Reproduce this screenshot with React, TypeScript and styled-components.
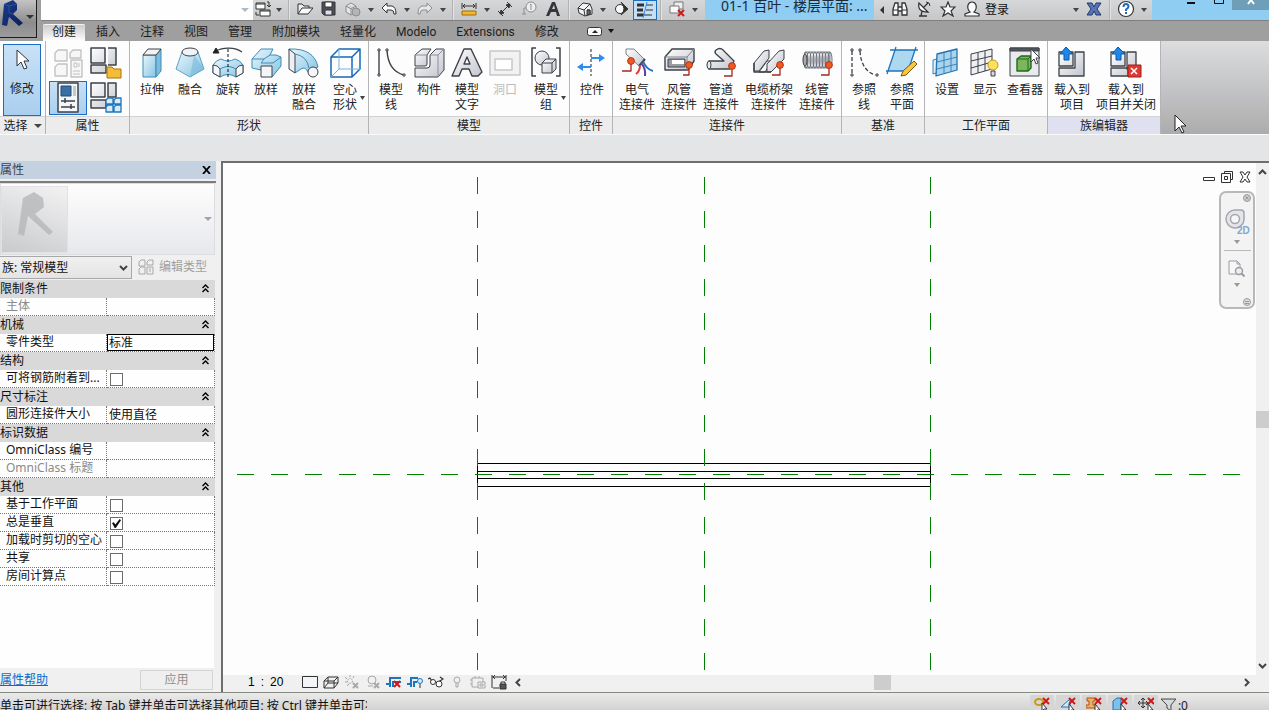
import React, { useState } from "react";
import styled, { createGlobalStyle, css } from "styled-components";

const GlobalStyle = createGlobalStyle`
  *, *::before, *::after { box-sizing: border-box; }
  html, body, #root { height: 100%; }
  body {
    margin: 0;
    overflow: hidden;
    background: #f0f0f0;
    color: #222;
    font-family: "Noto Sans", "Noto Sans CJK SC", sans-serif;
    font-size: 12px;
    line-height: 16px;
  }
  button, input, select { font: inherit; color: inherit; margin: 0; padding: 0; }
  button { border: 0; background: none; white-space: nowrap; }
`;

const Page = styled.div`
  display: flex;
  flex-direction: column;
  height: 100vh;
`;

/* ---------- header ---------- */

const Header = styled.header`
  display: grid;
  grid-template-columns: 41px minmax(0, 1fr);
  grid-template-rows: 21px 20px;
  flex: none;
  background: #9f9f9f;
`;

const AppButton = styled.button`
  grid-row: 1 / 3;
  display: flex;
  align-items: flex-start;
  width: 37px;
  height: 38px;
  background: linear-gradient(#c4c4c4, #8c8c8c 60%, #9c9c9c);
  border: solid #1c1c1c;
  border-width: 0 1px 1px 0;
`;

const TitleBar = styled.div`
  display: flex;
  align-items: stretch;
  min-width: 0;
  background: linear-gradient(#d6d7d8, #c6c7c9);
  border-bottom: 1px solid #808080;
  overflow: hidden;
`;

const FamilyBox = styled.div`
  display: flex;
  align-items: center;
  justify-content: flex-end;
  width: 212px;
  flex: none;
  padding-right: 4px;
  background: #fefefe;
`;

const ToolCluster = styled.div`
  display: flex;
  flex: none;
  padding-right: 4px;
`;

const ToolButton = styled.button<{ $active?: boolean; $narrow?: boolean }>`
  display: flex;
  align-items: center;
  justify-content: center;
  width: ${(p) => (p.$narrow ? 20 : 24)}px;
  flex: none;
  padding-bottom: 2px;
  ${(p) =>
    p.$active &&
    css`
      background: #c5dff5;
      border: 1px solid #1a6fc4;
      padding-bottom: 1px;
    `}
`;

const DropButton = styled.button`
  display: flex;
  align-items: center;
  justify-content: center;
  width: 12px;
  flex: none;
`;

const Divider = styled.span`
  width: 8px;
  flex: none;
  border-left: 1px solid #b2b2b2;
  background: linear-gradient(90deg, #e4e4e4 1px, transparent 1px);
  margin-left: 3px;
  margin-right: -3px;
`;

const DocTitle = styled.h1`
  flex: 1;
  min-width: 0;
  margin: 0;
  padding-left: 16px;
  overflow: hidden;
  white-space: nowrap;
  background: #8fcdf2;
  color: #1b2a38;
  font-size: 14px;
  font-weight: 400;
  line-height: 11px;
`;

const InfoCenter = styled.div`
  display: flex;
  width: 278px;
  flex: none;
  padding: 0 2px;
`;

const LoginButton = styled.button`
  flex: 1;
  padding-left: 1px;
  text-align: left;
  line-height: 18px;
  color: #111;
`;

const WindowButtons = styled.div`
  display: flex;
  width: 117px;
  flex: none;
  justify-content: flex-end;
  align-items: flex-start;
  background: #8fcdf2;
`;

const WindowButton = styled.button<{ $close?: boolean }>`
  display: flex;
  justify-content: center;
  width: ${(p) => (p.$close ? 37 : 27)}px;
  height: 10px;
  background: ${(p) => (p.$close ? "#6f9fb8" : "none")};
`;

const TabRow = styled.nav`
  display: flex;
  align-items: stretch;
  padding-left: 1px;
`;

const Tab = styled.button<{ $active?: boolean }>`
  margin: 3px 1px 0;
  padding: 0 9px;
  line-height: 17px;
  color: #1d1d1d;
  font-family: Roboto, "Noto Sans CJK SC", sans-serif;
  ${(p) =>
    p.$active &&
    css`
      background: linear-gradient(#c9c9c9, #fdfdfd);
      border-radius: 2px 2px 0 0;
      box-shadow: inset 0 1px #f4f4f4;
    `}
`;

const TabToggle = styled.button`
  display: flex;
  align-items: center;
  gap: 5px;
  margin-left: 18px;
`;

/* ---------- ribbon ---------- */

const Ribbon = styled.div`
  display: flex;
  flex: none;
  height: 94px;
  background: linear-gradient(#dcdddf, #acacad);
  border-bottom: 1px solid #fafafa;
`;

const Group = styled.section`
  display: flex;
  flex-direction: column;
  flex: none;
  background: #fdfdfd;
  border-right: 1px solid #b4b4b6;
`;

const GroupTools = styled.div<{ $tight?: boolean; $roomy?: boolean }>`
  display: flex;
  flex: 1;
  padding: ${(p) => (p.$tight ? "3px 4px 0 3px" : p.$roomy ? "0 3px" : "0 1px 0 3px")};
`;

const GroupTitle = styled.h2<{ $accent?: boolean }>`
  display: flex;
  align-items: center;
  justify-content: center;
  gap: 6px;
  height: 18px;
  margin: 0;
  font-size: 12px;
  font-weight: 400;
  line-height: 17px;
  border-top: 1px solid #d2d2d2;
  background: ${(p) => (p.$accent ? "#dfe1f1" : "#ececec")};
`;

const BigButton = styled.button<{ $menu?: boolean }>`
  display: flex;
  flex-direction: column;
  align-items: center;
  gap: 4px;
  min-width: ${(p) => (p.$menu ? 44 : 38)}px;
  padding: 5px 3px 0;
  line-height: 15px;
  &:disabled { color: #bcbcbc; }
`;

const BigLabel = styled.span`
  display: flex;
  align-items: flex-end;
  white-space: pre-line;
  text-align: center;
`;

const MenuMark = styled.span`
  width: 0;
  padding-bottom: 12px;
  padding-left: 3px;
  margin-right: -3px;
  line-height: 0;
`;

const ModifyButton = styled.button`
  display: flex;
  flex-direction: column;
  align-items: center;
  gap: 4px;
  width: 38px;
  height: 72px;
  background: linear-gradient(#c9e1f6, #a9cfee);
  border: 1px solid #1a6fc4;
`;

const PaletteGrid = styled.div`
  display: grid;
  grid-template-columns: 38px 38px;
  grid-template-rows: 37px 34px;
`;

const PaletteButton = styled.button<{ $active?: boolean }>`
  display: flex;
  align-items: center;
  justify-content: center;
  ${(p) =>
    p.$active &&
    css`
      background: linear-gradient(#c9e1f6, #a9cfee);
      border: 1px solid #1a6fc4;
    `}
`;

const RibbonRest = styled.div`
  flex: 1;
  position: relative;
`;

const Pointer = styled.svg`
  position: absolute;
  left: 13px;
  top: 73px;
`;

const OptionsBar = styled.div`
  height: 26px;
  flex: none;
  background: #e3e5e7;
`;

/* ---------- properties ---------- */

const Workspace = styled.main`
  display: grid;
  grid-template-columns: 221px minmax(0, 1fr);
  flex: 1;
  min-height: 0;
`;

const Palette = styled.aside`
  display: flex;
  flex-direction: column;
  margin-right: 5px;
  min-height: 0;
  background: #f0f0f0;
`;

const PaletteTitle = styled.div`
  display: flex;
  align-items: center;
  justify-content: space-between;
  height: 18px;
  flex: none;
  padding-right: 5px;
  background: #c3d1e0;
  color: #3a4450;
  line-height: 18px;
`;

const PaletteBody = styled.div`
  display: flex;
  flex-direction: column;
  flex: 1;
  min-height: 0;
  margin-top: 2px;
  padding-right: 1px;
  border-top: 2px solid #7c7c7c;
`;

const TypeSelector = styled.button`
  display: flex;
  align-items: center;
  justify-content: space-between;
  height: 72px;
  flex: none;
  padding: 1px 2px 1px 0;
  background: linear-gradient(#fdfdfd, #e7e8ec);
  border: 1px solid #dcdde1;
`;

const Preview = styled.span`
  display: flex;
  width: 67px;
  height: 67px;
  border: 1px solid #e2e2e4;
  background: linear-gradient(20deg, #c9cacc, #f2f2f3);
`;

const FilterRow = styled.div`
  display: flex;
  align-items: center;
  gap: 6px;
  height: 25px;
  flex: none;
`;

const SelectWrap = styled.span`
  display: grid;
  grid-template-columns: 1fr 16px;
  align-items: center;
  width: 132px;
  height: 23px;
  border: 1px solid #a8a8a8;
  border-left: 0;
  background: linear-gradient(#f0f0f0, #e4e4e4);
`;

const FamilySelect = styled.select`
  grid-area: 1 / 1 / 2 / 3;
  width: 100%;
  height: 21px;
  padding-left: 2px;
  appearance: none;
  border: 0;
  background: none;
  color: #111;
`;

const SelectMark = styled.svg`
  grid-area: 1 / 2;
  justify-self: center;
  pointer-events: none;
`;

const EditType = styled.button`
  display: flex;
  align-items: center;
  gap: 5px;
  padding-bottom: 2px;
  color: #a0a0a0;
`;

const PropTable = styled.table`
  width: 215px;
  flex: none;
  border-collapse: separate;
  border-spacing: 0;
  table-layout: fixed;
  background: #fefefe;
  color: #111;
`;

const NameCol = styled.col`
  width: 107px;
`;

const SectionHead = styled.th`
  height: 18px;
  padding: 0 0 1px;
  background: #d9d9d9;
  font-weight: 400;
  text-align: left;
  line-height: 17px;
`;

const SectionToggle = styled.button`
  display: flex;
  align-items: center;
  justify-content: space-between;
  width: 100%;
  padding-right: 6px;
`;

const NameCell = styled.th<{ $muted?: boolean }>`
  height: 18px;
  padding: 0 0 2px 6px;
  border-right: 1px dotted #777;
  border-bottom: 1px dotted #777;
  font-weight: 400;
  text-align: left;
  white-space: nowrap;
  line-height: 15px;
  color: ${(p) => (p.$muted ? "#8a8a8a" : "#111")};
`;

const ValueCell = styled.td`
  height: 18px;
  padding: 0;
  border-right: 1px dotted #777;
  border-bottom: 1px dotted #777;
  line-height: 0;
`;

const ValueInput = styled.input<{ $focus?: boolean }>`
  display: block;
  width: 100%;
  height: 17px;
  padding: 0 2px 2px;
  border: 0;
  outline: 0;
  background: none;
  line-height: 15px;
  ${(p) =>
    p.$focus &&
    css`
      border: 1px solid #000;
      padding: 0 1px 2px;
    `}
`;

const Tick = styled.input`
  appearance: none;
  display: grid;
  place-items: center;
  width: 13px;
  height: 13px;
  margin: 3px 0 1px 3px;
  border: 1px solid #6c6c6c;
  background: #fff;
  &:checked::before {
    content: "";
    width: 9px;
    height: 9px;
    background: #111;
    clip-path: polygon(0 45%, 20% 35%, 38% 60%, 85% 0, 100% 15%, 42% 100%, 30% 100%);
  }
`;

const TableFill = styled.div`
  flex: 1;
  min-height: 0;
  margin-right: 1px;
  background: #fefefe;
`;

const PaletteFooter = styled.div`
  display: flex;
  justify-content: space-between;
  align-items: center;
  height: 24px;
  flex: none;
  padding-right: 2px;
`;

const HelpLink = styled.a`
  color: #0b6bc9;
`;

const ApplyButton = styled.button`
  width: 73px;
  height: 20px;
  border: 1px solid #d4d4d4;
  background: #efefef;
  color: #8f8f8f;
`;

/* ---------- view ---------- */

const View = styled.section`
  position: relative;
  display: grid;
  grid-template-columns: minmax(0, 1fr) 13px;
  grid-template-rows: minmax(0, 1fr) 17px;
  border: solid #6e6e6e;
  border-width: 2px 0 0 2px;
`;

const Drawing = styled.svg`
  width: 100%;
  height: 100%;
  background: #fdfdfd;
`;

const VScroll = styled.div`
  display: flex;
  flex-direction: column;
  align-items: center;
  justify-content: space-between;
  padding: 5px 0;
  background: #f0f0f0;
`;

const ScrollThumb = styled.span<{ $flat?: boolean }>`
  width: ${(p) => (p.$flat ? 17 : 13)}px;
  height: ${(p) => (p.$flat ? 15 : 17)}px;
  background: #cdcdcd;
`;

const ViewBar = styled.div`
  grid-column: 1 / 3;
  display: flex;
  align-items: center;
  padding: 0 0 3px 25px;
  background: #f0f0f0;
`;

const ScaleButton = styled.button`
  display: flex;
  gap: 6px;
  width: 51px;
  text-align: left;
  color: #000;
  font-family: "Liberation Sans", sans-serif;
`;

const ViewButton = styled.button`
  display: flex;
  justify-content: center;
  width: 21px;
  flex: none;
`;

const HScroll = styled.div`
  display: flex;
  flex: 1;
  align-items: center;
  justify-content: space-between;
  padding: 0 18px 0 5px;
`;

const HTrack = styled.span`
  display: flex;
  flex: 1;
  justify-content: center;
`;

const MdiButtons = styled.div`
  position: absolute;
  top: 7px;
  right: 17px;
  display: flex;
  gap: 4px;
`;

const NavBar = styled.div`
  position: absolute;
  top: 28px;
  right: 14px;
  display: flex;
  flex-direction: column;
  align-items: center;
  width: 36px;
  height: 118px;
  border: 2px solid #b8b8b8;
  border-radius: 7px;
  background: #f3f3f3;
`;

const NavSmall = styled.button`
  display: flex;
  align-self: flex-end;
  padding: 1px 2px;
`;

const NavTool = styled.button<{ $line?: boolean }>`
  display: flex;
  flex-direction: column;
  align-items: center;
  justify-content: center;
  gap: 5px;
  width: 27px;
  flex: 1;
  border-top: ${(p) => (p.$line ? "1px solid #b8b8b8" : "0")};
`;

const StatusBar = styled.footer`
  display: flex;
  justify-content: space-between;
  height: 18px;
  flex: none;
  overflow: hidden;
  border-top: 1px solid #868a80;
  background: linear-gradient(#ebebeb, #d2d2d2);
`;

const StatusText = styled.p`
  width: 367px;
  margin: 0;
  padding-top: 5px;
  overflow: hidden;
  white-space: nowrap;
  color: #111;
`;

const StatusTools = styled.div`
  display: flex;
  gap: 2px;
  padding: 2px 81px 0 0;
`;

const StatusButton = styled.button<{ $plain?: boolean }>`
  display: flex;
  align-items: flex-start;
  justify-content: center;
  width: ${(p) => (p.$plain ? 28 : 24)}px;
  height: 24px;
  padding-top: ${(p) => (p.$plain ? 3 : 1)}px;
  background: ${(p) => (p.$plain ? "none" : "#d6d6d6")};
`;

/* ---------- drawings ---------- */

const Caret = ({ c = "#444", w = 8 }: { c?: string; w?: number }) => (
  <svg width={w} height="4" viewBox="0 0 8 4" preserveAspectRatio="none" aria-hidden="true">
    <path d="M0 0h8L4 4z" fill={c} />
  </svg>
);

const S = ({ children, size = 16, stroke = "#333" }: { children: React.ReactNode; size?: number; stroke?: string }) => (
  <svg width={size} height={size} viewBox={`0 0 ${size} ${size}`} fill="none" stroke={stroke} aria-hidden="true">
    {children}
  </svg>
);

const B = ({ children, stroke = "#3c4148" }: { children: React.ReactNode; stroke?: string }) => (
  <svg width="32" height="32" viewBox="0 0 32 32" fill="none" stroke={stroke} strokeLinejoin="round" aria-hidden="true">
    {children}
  </svg>
);

const DefsSvg = styled.svg`
  position: absolute;
  width: 0;
  height: 0;
`;

const Gradients = () => (
  <DefsSvg aria-hidden="true">
    <defs>
      <linearGradient id="aqua" x1="0" y1="0" x2="1" y2="1">
        <stop offset="0" stopColor="#e9f6fc" />
        <stop offset="1" stopColor="#86c4e2" />
      </linearGradient>
      <linearGradient id="steel" x1="0" y1="0" x2="1" y2="1">
        <stop offset="0" stopColor="#ffffff" />
        <stop offset="1" stopColor="#c2c5ce" />
      </linearGradient>
      <linearGradient id="navy" x1="0" y1="0" x2="1" y2="1">
        <stop offset="0" stopColor="#1c3f8c" />
        <stop offset="1" stopColor="#0a1d5c" />
      </linearGradient>
    </defs>
  </DefsSvg>
);

const RedX = ({ x, y }: { x: number; y: number }) => (
  <path d={`M${x} ${y}l6 6m0-6l-6 6`} stroke="#cc1a1a" strokeWidth="2" />
);

const Node = ({ x, y, d }: { x: number; y: number; d: string }) => (
  <g>
    <path d={d} stroke="#a32a1c" strokeWidth="1.3" />
    <circle cx={x} cy={y} r="3.4" fill="#ee5a24" stroke="#b53313" />
  </g>
);

const icons: Record<string, React.ReactNode> = {
  extrude: (
    <B>
      <path d="M7 9h13v22H7z" fill="url(#aqua)" stroke="#3a8db8" />
      <path d="M20 9l5-6v22l-5 6z" fill="#7cbddd" stroke="#3a8db8" />
      <path d="M7 9l5-6h13l-5 6z" fill="#f1f3f6" />
    </B>
  ),
  blend: (
    <B>
      <path d="M8 6L2 23l14 8 14-8-6-17z" fill="url(#aqua)" stroke="#5aa3c8" />
      <path d="M20 9l10 14-14 8z" fill="#6fb4d6" fillOpacity=".5" stroke="none" />
      <ellipse cx="16" cy="6" rx="8" ry="4" fill="#f1f3f6" />
    </B>
  ),
  revolve: (
    <B>
      <path d="M30 6C23 1 11 1 4 5" strokeWidth="1.3" />
      <path d="M1 7l3-5 3 5z" fill="#222" stroke="#222" />
      <path d="M1 19q3-5 8-6 7 4 14 0 5 1 8 6v8l-7 4q-8-5-16 0l-7-4z" fill="url(#aqua)" stroke="#3a8db8" />
      <path d="M1 19q5 0 7 4v8l-7-4zM31 19q-5 0-7 4v8l7-4z" fill="#f6f8fa" />
      <path d="M8 23q8-5 16 0" stroke="#3a8db8" />
      <path d="M16 3v28" strokeDasharray="3 2" stroke="#111" />
    </B>
  ),
  sweep: (
    <B>
      <path d="M2 13l9-10h12l-3 6h6l5 2v9l-9 11-11-7-9-2z" fill="url(#aqua)" stroke="#3a8db8" />
      <path d="M2 13h12l6-4M14 13l-3 4h12l8-6" stroke="#3a8db8" />
      <path d="M11 20h11v11H11z" fill="#f4f5f7" />
    </B>
  ),
  sweptBlend: (
    <B>
      <path d="M1 3q25-1 29 18l-10 5q-3-6-7-3l-6 4z" fill="url(#aqua)" stroke="#3a8db8" />
      <path d="M1 3l6 5v19l-6-4z" fill="#eceff3" />
      <path d="M7 8q12 2 14 14" stroke="#3a8db8" />
      <circle cx="25" cy="26" r="5" fill="#f4f5f7" />
    </B>
  ),
  void: (
    <B stroke="#1668b8">
      <path d="M2 11h21v20H2zM2 11l8-8h21v20l-8 8M23 11l8-8" strokeWidth="1.5" />
      <path d="M10 3v20h21M10 23l-8 8" stroke="#6fb3e6" />
    </B>
  ),
  modelLine: (
    <B>
      <path d="M4 4v25M12 4q1 21 17 25" strokeWidth="1.4" />
      <path d="M3 3h2v2H3zM3 28h2v2H3zM11 3h2v2h-2zM28 28h2v2h-2z" fill="#fff" />
    </B>
  ),
  component: (
    <B>
      <path d="M2 9l7-6h9l-4 6v9q0 2-2 2H2z" fill="url(#steel)" />
      <path d="M17 9l6-6h8v21l-6 7H2v-9h12q3 0 3-3z" fill="url(#steel)" />
      <path d="M17 9h8v22M25 9l6-6M2 9h12" stroke="#8b9099" />
    </B>
  ),
  modelText: (
    <B>
      <path d="M1 30L13 3h7l11 23-4 4h-6l-3-7h-7l-3 7z" fill="url(#steel)" strokeWidth="1.4" />
      <path d="M13 18l3-7 3 7z" fill="#fff" strokeWidth="1.4" />
    </B>
  ),
  opening: (
    <B stroke="#c8c8cc">
      <path d="M1 5h30v24H1z" fill="#f2f2f3" strokeWidth="1.5" />
      <path d="M6 13h17v11H6z" fill="#fff" strokeWidth="1.5" />
    </B>
  ),
  modelGroup: (
    <B>
      <path d="M6 2H2v28h4M26 2h4v28h-4" strokeWidth="1.5" />
      <circle cx="12" cy="12" r="7" fill="url(#steel)" />
      <path d="M12 17l4-4h10v10l-4 4H12z" fill="url(#steel)" />
      <path d="M12 17h10v10M22 17l4-4" />
    </B>
  ),
  control: (
    <B>
      <path d="M15 3v27" strokeDasharray="3 2" stroke="#222" />
      <path d="M15 12h10M15 21H5" stroke="#2c8cf0" strokeWidth="2" />
      <path d="M23 8l6 4-6 4zM7 17l-6 4 6 4z" fill="#2c8cf0" stroke="none" />
    </B>
  ),
  electric: (
    <B>
      <path d="M5 3h8l11 11-6 6L5 8z" fill="url(#steel)" stroke="#7d828a" />
      <path d="M18 20l6-7" strokeWidth="2" />
      <path d="M22 15q3 8 10 10" stroke="#1d75bd" strokeWidth="2" />
      <path d="M20 17q5 5 4 13" stroke="#5a40a8" strokeWidth="2" />
      <path d="M19 19q0 6-4 9" stroke="#e03838" strokeWidth="2" />
      <Node x={10} y={15} d="M10 15v10H1" />
    </B>
  ),
  duct: (
    <B>
      <path d="M2 11l7-8h22v12l-6 9H2z" fill="url(#steel)" strokeWidth="1.4" />
      <path d="M2 11h22v13M24 11l7-8" stroke="#7d828a" />
      <path d="M5 13h17v8H5z" fill="#9a9da4" />
      <path d="M9 14h12v4H9z" fill="#fff" stroke="none" />
      <Node x={26} y={19} d="M26 19v10h-6" />
    </B>
  ),
  pipe: (
    <B>
      <path d="M11 4q4-3 7 0l11 11-4 8H4q-3-4 0-8h15l-8-7q-2-2 0-4z" fill="url(#steel)" strokeWidth="1.3" />
      <ellipse cx="4" cy="19" rx="2" ry="4" fill="#e6e8eb" />
      <Node x={27} y={20} d="M27 20v10h-8" />
    </B>
  ),
  tray: (
    <B>
      <path d="M1 17L11 5l5-1v8L6 25H1z" fill="url(#steel)" />
      <path d="M6 26l8-11h5l-7 11z" fill="#f4f5f7" />
      <path d="M14 18L26 5l5-1v9L18 26h-4z" fill="url(#steel)" />
      <path d="M1 17v9h17" strokeWidth="1.4" />
      <Node x={27} y={19} d="M27 19v10h-8" />
    </B>
  ),
  conduit: (
    <B>
      <path d="M4 6h25v16H4q-3-8 0-16z" fill="url(#steel)" stroke="#7d828a" />
      {[5, 8, 11, 14, 17, 20, 23, 26, 29].map((x) => (
        <ellipse key={x} cx={x} cy="14" rx="2" ry="8" stroke="#6b7078" />
      ))}
      <ellipse cx="4" cy="14" rx="2" ry="6" fill="#aaa" />
      <Node x={28} y={19} d="M28 19v10h-8" />
    </B>
  ),
  refLine: (
    <B>
      <path d="M4 5v23M12 5q1 19 15 24" strokeDasharray="4 2" strokeWidth="1.3" />
      <path d="M3 3h2v2H3zM3 28h2v2H3zM11 3h2v2h-2zM28 28h2v2h-2z" fill="#fff" />
    </B>
  ),
  refPlane: (
    <B>
      <path d="M9 4h20l-7 21H2z" fill="#aed7f0" stroke="none" />
      <path d="M4 4h28M0 25h20M10 1L1 28M30 1l-6 18" stroke="#1d75bd" strokeWidth="1.3" />
      <path d="M15 30l2-5L28 15l3 3-11 11z" fill="#f8c73c" stroke="#7a5518" />
    </B>
  ),
  setPlane: (
    <B stroke="#3a83b8">
      <path d="M2 14l11-3v14L2 28z" fill="#dcecf6" />
      <path d="M6 8l20-5v21L5 30z" fill="#a9d4ee" stroke="#2374b0" strokeWidth="1.3" />
      <path d="M13 7v20M20 5v21M6 16l20-5M6 23l20-5" />
    </B>
  ),
  showPlane: (
    <B>
      <path d="M2 8l21-5v20L2 29z" fill="#eef0f2" />
      <path d="M9 7v20M16 5v20M2 15l21-5M2 22l21-6" />
      <circle cx="24" cy="19" r="5" fill="#ffe05a" stroke="#c99a14" />
      <path d="M22 25h4v5h-4z" fill="#d8d8d8" />
    </B>
  ),
  viewer: (
    <B>
      <path d="M1 2h29v28H1z" fill="#e9eaec" />
      <path d="M1 2h29v3H1z" fill="#54585e" />
      <path d="M8 13l4-3h10v12l-3 3H8z" fill="#7cb55b" stroke="#1f6b1c" strokeWidth="1.4" />
      <path d="M8 13h11v12M19 13l3-3" stroke="#1f6b1c" />
      <path d="M22 3v13l3-3 2 5 2-1-2-5h4z" fill="#fff" />
    </B>
  ),
  load: (
    <B>
      <path d="M3 6h14v14H3zM19 6h9v24H3v-8h16z" fill="url(#steel)" strokeWidth="1.3" />
      <path d="M10 1l7 7h-4v6H8V8H4z" fill="#1d86e8" stroke="#0d58a8" />
    </B>
  ),
  loadClose: (
    <B>
      <path d="M1 6h14v14H1zM17 6h9v17h-9zM1 22h17v8H1z" fill="url(#steel)" strokeWidth="1.3" />
      <path d="M8 1l7 7h-4v6H6V8H2z" fill="#1d86e8" stroke="#0d58a8" />
      <path d="M18 19h13v12H18z" fill="#dd3a34" stroke="#a31c18" />
      <path d="M21 22l6 6m0-6l-6 6" stroke="#fff" strokeWidth="1.5" />
    </B>
  ),
  types: (
    <B stroke="#c2c2c5">
      <path d="M3 6l3-3h9v11H3zM18 6l3-3h8v8H18zM3 20l3-3h9v12H3z" fill="#f7f7f8" strokeWidth="1.4" />
      <path d="M19 13h11v17H19z" fill="#f7f7f8" strokeWidth="1.4" />
      <path d="M22 16h3v4h-3zM27 16v4M21 24h7M21 27h7" />
    </B>
  ),
  category: (
    <B>
      <path d="M1 1h14v15H1zM18 1h8v17h-8M1 18h15v8H1z" fill="url(#steel)" strokeWidth="1.5" />
      <path d="M17 20h5l2 2h7v9H17z" fill="#f3bd35" stroke="#a8740e" />
    </B>
  ),
  props: (
    <B>
      <path d="M6 1h20v29H6z" fill="#f5f6f8" strokeWidth="1.5" />
      <path d="M9 4h10v10H9z" fill="#3a6fa6" stroke="#1c4878" />
      <path d="M21 4h3v10h-3z" fill="#c4c8cf" stroke="none" />
      <path d="M9 19h14M9 25h14M13 16v5M19 22v5" strokeWidth="1.5" />
    </B>
  ),
  famTypes: (
    <B>
      <path d="M1 1h14v14H1zM18 1h8v14h-8zM1 18h15v8H1z" fill="url(#steel)" strokeWidth="1.5" />
      <path d="M16 18l2-2h5v6h-7zM24 18l2-2h5v6h-7zM16 25l2-2h5v7h-7zM24 25l2-2h5v7h-7z" fill="#d4ebfa" stroke="#1d75bd" strokeWidth="1.3" />
    </B>
  ),
};

const qat: Record<string, React.ReactNode> = {
  switchWin: (
    <S>
      <path d="M1 2h9v6H1zM5 9h10v6H5z" fill="#fff" />
      <path d="M1 3h9M5 10h10M1 11v3h3M12 1h2v5M12 4l2 2 2-2" />
    </S>
  ),
  open: (
    <S>
      <path d="M1 13V3h4l2 2h5v3" fill="#eee" />
      <path d="M1 13l4-6h11l-5 6z" fill="#fafafa" />
    </S>
  ),
  save: (
    <S>
      <path d="M1 1h13v13H3l-2-2z" fill="#4b5058" />
      <path d="M4 1h7v5H4z" fill="#fff" />
      <path d="M4 9h7v5H4z" fill="#dde" />
    </S>
  ),
  sync: (
    <S stroke="#8d8d8d">
      <path d="M1 5l5-3 5 3v6l-5 3-5-3zM6 8v6M1 5l5 3 5-3" fill="#e6e6e6" />
      <circle cx="11" cy="11" r="4" fill="#b5b5b5" />
    </S>
  ),
  undo: (
    <S>
      <path d="M1 7l5-5v3h5q4 1 4 8h-2q0-4-3-4H6v3z" fill="#fafafa" />
    </S>
  ),
  redo: (
    <S stroke="#8d8d8d">
      <path d="M15 7l-5-5v3H5q-4 1-4 8h2q0-4 3-4h4v3z" fill="#e8e8e8" />
    </S>
  ),
  measure: (
    <S>
      <path d="M1 2v6M15 2v6M2 5h12M4 3L2 5l2 2M12 3l2 2-2 2" />
      <path d="M1 10h14v4H1z" fill="#f2b630" stroke="#a06e0c" />
    </S>
  ),
  dim: (
    <S>
      <path d="M3 13L13 3M1 10l5 5M10 1l5 5" />
      <path d="M3 13l1-4 3 3zM13 3l-1 4-3-3z" fill="#333" />
    </S>
  ),
  tag: (
    <S stroke="#8d8d8d">
      <circle cx="10" cy="6" r="5" fill="#eee" />
      <path d="M5 7H3v6M1 13h4M9 4l1-1v6" />
    </S>
  ),
  text: (
    <S>
      <path d="M1 15L7 1h3l5 14h-3l-1-4H6l-2 4zM7 8h3L9 4z" fill="#33373d" fillRule="evenodd" stroke="none" />
    </S>
  ),
  house: (
    <S>
      <path d="M1 7l5-5 7 1 2 5v5l-7 2-6-3z" fill="#f2f3f5" />
      <path d="M1 7l6 2 6-6M7 9l1 6M10 9h3v4" />
      <path d="M10 9h3v4l-3 1z" fill="#667" />
    </S>
  ),
  section: (
    <S>
      <circle cx="7" cy="8" r="4.5" fill="#fafafa" />
      <path d="M8 1l7 7-7 6q6-6 0-13z" fill="#333" />
    </S>
  ),
  thin: (
    <S>
      <path d="M0 3h7M0 8h6M0 13h7" strokeWidth="3" />
      <path d="M9 3h7M9 8h7M7 13h8" />
      <path d="M10 0L6 16" stroke="#2c8cf0" />
    </S>
  ),
  closeWin: (
    <S>
      <path d="M5 1h9v7H5z" fill="#eee" stroke="#777" />
      <path d="M1 5h9v7H1z" fill="#fafafa" stroke="#777" />
      <RedX x={9} y={9} />
    </S>
  ),
  binoc: (
    <S>
      <path d="M1 14V8l2-6h3v12zM10 14V2h3l2 6v6zM6 6h4v4H6z" fill="#fafafa" strokeWidth="1.3" />
      <path d="M1 9h5M10 9h5" />
    </S>
  ),
  dish: (
    <S>
      <path d="M3 2q-2 9 9 9zM7 7l5-5M3 15h8M6 10l-1 5" fill="#fafafa" strokeWidth="1.3" />
      <path d="M10 1q4 0 4 4" />
    </S>
  ),
  star: (
    <S>
      <path d="M8 1l2 5h5l-4 4 2 5-5-3-5 3 2-5-4-4h5z" fill="#fafafa" strokeWidth="1.2" />
    </S>
  ),
  user: (
    <S>
      <path d="M1 15v-2l5-2q-3-3-2-7 1-3 4-3t4 3q1 4-2 7l5 2v2z" fill="#fafafa" strokeWidth="1.2" />
    </S>
  ),
  exchange: (
    <S>
      <path d="M1 2h5l2 4 2-4h5l-4 6 4 6h-5l-2-4-2 4H1l4-6z" fill="#5874b4" stroke="#23386e" />
    </S>
  ),
  help: (
    <svg width="18" height="18" viewBox="0 0 18 18" fill="none" aria-hidden="true">
      <circle cx="9" cy="9" r="7.5" fill="#fff" stroke="#333" strokeWidth="1.2" />
      <path d="M6.500 7q0-3 2.500-3t2.500 2.500Q11.500 8 9 9.500V11M9 12v2" stroke="#2368c4" strokeWidth="2" />
    </svg>
  ),
};

const Logo = () => (
  <svg width="24" height="30" viewBox="0 0 24 30" aria-hidden="true">
    <path d="M4 4L13 0l4 4v6l-4 4 10 9-4 3-10-9-2 9-5-1z" fill="url(#navy)" />
    <path d="M4 4l5 2 8-2M9 6v7l4 1" fill="none" stroke="#3a61ad" strokeOpacity=".6" />
  </svg>
);

const FadedLogo = () => (
  <svg width="65" height="65" viewBox="0 0 65 65" aria-hidden="true">
    <path d="M21 11l11-6 9 6 1 9-9 7 18 18-4 3-21-19-4 20-6-2z" fill="#b5b6b9" fillOpacity=".8" />
  </svg>
);

const Collapse = () => (
  <svg width="7" height="9" viewBox="0 0 7 9" fill="none" stroke="#000" strokeWidth="1.4" aria-hidden="true">
    <path d="M.5 4l3-3 3 3M.5 8l3-3 3 3" />
  </svg>
);

const Chevron = ({ d }: { d: string }) => (
  <svg width="9" height="9" viewBox="0 0 9 9" fill="none" stroke="#444" strokeWidth="2" aria-hidden="true">
    <path d={d} />
  </svg>
);

const viewIcons: [string, React.ReactNode][] = [
  ["详细程度", <S key="a"><path d="M.5 2.500h15v11H.5z" fill="#f3f4f8" /></S>],
  ["视觉样式", <S key="b"><path d="M1 7l4-4h10v6l-4 5H1zM1 7h10v7M11 7l4-4M5 3v6l-4 5M5 9h10" /></S>],
  ["日光路径", <S key="c" stroke="#a8a8a8"><path d="M6 1v2M1 3l2 2M1 8h2M3 12l2-2M10 2L9 4" /><circle cx="6" cy="7" r="2.5" strokeDasharray="2 1" /><path d="M9 9l5 5m0-5l-5 5" strokeWidth="2" /></S>],
  ["阴影", <S key="d" stroke="#a8a8a8"><circle cx="7" cy="6" r="4" /><path d="M3 12h5" /><path d="M9 9l5 5m0-5l-5 5" strokeWidth="2" /></S>],
  ["裁剪视图", <S key="e"><path d="M4 13V4h11M0 10h4M7 13V8h8" stroke="#1d75bd" strokeWidth="2" /><RedX x={8} y={7} /></S>],
  ["显示裁剪区域", <S key="f"><path d="M4 13V4h7M0 10h4M7 13V8h3" stroke="#1d75bd" strokeWidth="2" /><circle cx="13" cy="7" r="2.5" fill="#d4ebfa" stroke="#1d75bd" /><path d="M13 10v4" /></S>],
  ["临时隐藏", <S key="g"><path d="M0 5l2-1 3 5M9 9l6-4-3-2" strokeWidth="1.3" /><circle cx="5" cy="8" r="2.5" fill="#fff" /><circle cx="11" cy="10" r="3" fill="#fff" /></S>],
  ["显示隐藏的图元", <S key="h" stroke="#a8a8a8"><circle cx="8" cy="6" r="3" /><path d="M7 9v4h2V9" /></S>],
  ["临时视图属性", <S key="i" stroke="#a8a8a8"><path d="M2 4h11v9H2zM0 6h2M0 10h2M5 2v2M9 2v2" /><path d="M8 8h7v6H8zM10 10h3v2h-3z" fill="#eee" /></S>],
  ["显示约束", <S key="j"><path d="M1 1v13M15 1v6M1 3h14M4 1L2 3l2 2M12 1l2 2-2 2M2 14h6" /><path d="M9 10h6v5H9z" fill="#555" /><path d="M10 10V8h4v2" /></S>],
];

const statusIcons: [string, React.ReactNode][] = [
  ["选择链接", <S key="a"><ellipse cx="5" cy="6" rx="4" ry="3" stroke="#c99a14" strokeWidth="2" /><RedX x={9} y={2} /><path d="M8 7v8l2-2h3z" fill="#fff" /></S>],
  ["选择基线图元", <S key="b"><path d="M1 11L10 3v8z" fill="#d4ebfa" stroke="#1d75bd" /><RedX x={9} y={2} /><path d="M9 8v8l2-2h3z" fill="#fff" /></S>],
  ["选择锁定图元", <S key="c"><path d="M1 2h8v3H7v4h3v3H0V9h3V5H1z" fill="#f0b060" stroke="#b05010" /><RedX x={9} y={2} /><path d="M9 8v8l2-2h3z" fill="#fff" /></S>],
  ["按面选择图元", <S key="d"><path d="M1 5l4-3h4v12H1z" fill="#7cc0ec" stroke="#1d75bd" /><RedX x={9} y={2} /><path d="M9 8v8l2-2h3z" fill="#fff" /></S>],
  ["选择时拖曳图元", <S key="e"><path d="M0 7h10M5 2v10M3 4l2-2 2 2M3 10l2 2 2-2M2 5L0 7l2 2M8 5l2 2-2 2" /><RedX x={10} y={2} /><path d="M10 8v8l2-2h3z" fill="#fff" /></S>],
];

/* ---------- data ---------- */

type Tool = { icon: string; label: string; menu?: boolean; off?: boolean };

const groups: { title: string; tools: Tool[]; accent?: boolean; roomy?: boolean }[] = [
  {
    title: "形状",
    tools: [
      { icon: "extrude", label: "拉伸" },
      { icon: "blend", label: "融合" },
      { icon: "revolve", label: "旋转" },
      { icon: "sweep", label: "放样" },
      { icon: "sweptBlend", label: "放样\n融合" },
      { icon: "void", label: "空心\n形状", menu: true },
    ],
  },
  {
    title: "模型",
    tools: [
      { icon: "modelLine", label: "模型\n线" },
      { icon: "component", label: "构件" },
      { icon: "modelText", label: "模型\n文字" },
      { icon: "opening", label: "洞口", off: true },
      { icon: "modelGroup", label: "模型\n组", menu: true },
    ],
  },
  { title: "控件", tools: [{ icon: "control", label: "控件" }] },
  {
    title: "连接件",
    roomy: true,
    tools: [
      { icon: "electric", label: "电气\n连接件" },
      { icon: "duct", label: "风管\n连接件" },
      { icon: "pipe", label: "管道\n连接件" },
      { icon: "tray", label: "电缆桥架\n连接件" },
      { icon: "conduit", label: "线管\n连接件" },
    ],
  },
  {
    title: "基准",
    roomy: true,
    tools: [
      { icon: "refLine", label: "参照\n线" },
      { icon: "refPlane", label: "参照\n平面" },
    ],
  },
  {
    title: "工作平面",
    tools: [
      { icon: "setPlane", label: "设置" },
      { icon: "showPlane", label: "显示" },
      { icon: "viewer", label: "查看器" },
    ],
  },
  {
    title: "族编辑器",
    accent: true,
    tools: [
      { icon: "load", label: "载入到\n项目" },
      { icon: "loadClose", label: "载入到\n项目并关闭" },
    ],
  },
];

type Prop = { name: string; value?: string; check?: boolean; muted?: boolean; focus?: boolean };

const sections: { title: string; rows: Prop[] }[] = [
  { title: "限制条件", rows: [{ name: "主体", value: "", muted: true }] },
  { title: "机械", rows: [{ name: "零件类型", value: "标准", focus: true }] },
  { title: "结构", rows: [{ name: "可将钢筋附着到...", check: false }] },
  { title: "尺寸标注", rows: [{ name: "圆形连接件大小", value: "使用直径" }] },
  {
    title: "标识数据",
    rows: [
      { name: "OmniClass 编号", value: "" },
      { name: "OmniClass 标题", value: "", muted: true },
    ],
  },
  {
    title: "其他",
    rows: [
      { name: "基于工作平面", check: false },
      { name: "总是垂直", check: true },
      { name: "加载时剪切的空心", check: false },
      { name: "共享", check: false },
      { name: "房间计算点", check: false },
    ],
  },
];

const tabs = ["创建", "插入", "注释", "视图", "管理", "附加模块", "轻量化", "Modelo", "Extensions", "修改"];

const Q = ({ n, label, active, narrow }: { n: string; label: string; active?: boolean; narrow?: boolean }) => (
  <ToolButton aria-label={label} $active={active} $narrow={narrow}>
    {qat[n]}
  </ToolButton>
);

const Drop = () => (
  <DropButton aria-label="更多">
    <Caret w={6} />
  </DropButton>
);

export default function App() {
  const [tab, setTab] = useState("创建");
  return (
    <Page>
      <GlobalStyle />
      <Gradients />
      <Header>
        <AppButton aria-label="应用程序菜单">
          <Logo />
          <svg width="12" height="22" viewBox="0 0 12 22" aria-hidden="true">
            <path d="M2 15h8l-4 4z" fill="#333" />
          </svg>
        </AppButton>
        <TitleBar>
          <FamilyBox>
            <Caret c="#a9bccb" />
          </FamilyBox>
          <ToolCluster>
            <Q n="switchWin" label="切换窗口" narrow />
            <Drop />
            <Divider />
            <Q n="open" label="打开" />
            <Q n="save" label="保存" />
            <Q n="sync" label="同步" />
            <Drop />
            <Q n="undo" label="放弃" />
            <Drop />
            <Q n="redo" label="重做" />
            <Drop />
            <Divider />
            <Q n="measure" label="测量" />
            <Drop />
            <Q n="dim" label="对齐尺寸标注" />
            <Q n="tag" label="标记" />
            <Q n="text" label="文字" />
            <Divider />
            <Q n="house" label="三维视图" />
            <Drop />
            <Q n="section" label="剖面" />
            <Q n="thin" label="细线" active />
            <Divider />
            <Q n="closeWin" label="关闭隐藏窗口" />
            <Drop />
          </ToolCluster>
          <DocTitle>01-1 百叶 - 楼层平面: ...</DocTitle>
          <InfoCenter>
            <DropButton aria-label="折叠">
              <svg width="4" height="8" viewBox="0 0 4 8" aria-hidden="true">
                <path d="M4 0v8L0 4z" fill="#333" />
              </svg>
            </DropButton>
            <Q n="binoc" label="搜索" />
            <Q n="dish" label="通讯中心" />
            <Q n="star" label="收藏夹" />
            <Q n="user" label="用户" />
            <LoginButton>登录</LoginButton>
            <Drop />
            <Q n="exchange" label="Exchange" />
            <Divider />
            <Q n="help" label="帮助" />
            <Drop />
          </InfoCenter>
          <WindowButtons>
            <WindowButton aria-label="最小化">
              <svg width="9" height="5" viewBox="0 0 9 5" aria-hidden="true"><path d="M0 2h8v2H0z" fill="#111" /></svg>
            </WindowButton>
            <WindowButton aria-label="最大化">
              <svg width="10" height="5" viewBox="0 0 10 5" fill="none" aria-hidden="true"><path d="M.5 0v3.500h9V0" stroke="#111" /></svg>
            </WindowButton>
            <WindowButton aria-label="关闭" $close>
              <svg width="10" height="5" viewBox="0 0 10 5" fill="none" aria-hidden="true"><path d="M2 4l3-4 3 4" stroke="#fff" strokeWidth="2" /></svg>
            </WindowButton>
          </WindowButtons>
        </TitleBar>
        <TabRow>
          {tabs.map((t) => (
            <Tab key={t} $active={t === tab} onClick={() => setTab(t)}>
              {t}
            </Tab>
          ))}
          <TabToggle aria-label="功能区显示">
            <svg width="16" height="9" viewBox="0 0 16 9" aria-hidden="true">
              <rect x=".5" y=".5" width="14" height="8" rx="2" fill="#fafafa" stroke="#333" />
              <path d="M5 6l3-3 3 3z" fill="#222" />
            </svg>
            <Caret c="#111" w={6} />
          </TabToggle>
        </TabRow>
      </Header>

      <Ribbon>
        <Group>
          <GroupTools $tight>
            <ModifyButton>
              <svg width="24" height="32" viewBox="0 0 24 32" aria-hidden="true">
                <path d="M7 5v16l4-4 3 7 3-1-3-7h5z" fill="#fff" stroke="#333" />
              </svg>
              修改
            </ModifyButton>
          </GroupTools>
          <GroupTitle>
            选择 <Caret />
          </GroupTitle>
        </Group>
        <Group>
          <GroupTools $tight>
            <PaletteGrid>
              <PaletteButton aria-label="类型属性" disabled>{icons.types}</PaletteButton>
              <PaletteButton aria-label="族类别和族参数">{icons.category}</PaletteButton>
              <PaletteButton aria-label="属性" $active>{icons.props}</PaletteButton>
              <PaletteButton aria-label="族类型">{icons.famTypes}</PaletteButton>
            </PaletteGrid>
          </GroupTools>
          <GroupTitle>属性</GroupTitle>
        </Group>
        {groups.map((g) => (
          <Group key={g.title}>
            <GroupTools $roomy={g.roomy}>
              {g.tools.map((t) => (
                <BigButton key={t.icon} disabled={t.off} $menu={t.menu}>
                  {icons[t.icon]}
                  <BigLabel>
                    {t.label}
                    {t.menu && (
                      <MenuMark>
                        <Caret w={5} />
                      </MenuMark>
                    )}
                  </BigLabel>
                </BigButton>
              ))}
            </GroupTools>
            <GroupTitle $accent={g.accent}>{g.title}</GroupTitle>
          </Group>
        ))}
        <RibbonRest>
          <Pointer width="14" height="20" viewBox="0 0 14 20" aria-hidden="true">
            <path d="M1 1v16l4-4 3 6 2-1-3-6h5z" fill="#fff" stroke="#222" />
          </Pointer>
        </RibbonRest>
      </Ribbon>
      <OptionsBar />

      <Workspace>
        <Palette>
          <PaletteTitle>
            属性
            <button aria-label="关闭属性">
              <svg width="9" height="8" viewBox="0 0 9 8" fill="none" stroke="#000" strokeWidth="1.8" aria-hidden="true">
                <path d="M1 0l7 8M8 0L1 8" />
              </svg>
            </button>
          </PaletteTitle>
          <PaletteBody>
            <TypeSelector aria-label="类型选择器">
              <Preview>
                <FadedLogo />
              </Preview>
              <Caret c="#a4a4a4" />
            </TypeSelector>
            <FilterRow>
              <SelectWrap>
                <FamilySelect aria-label="属性过滤器">
                  <option>族: 常规模型</option>
                </FamilySelect>
                <SelectMark width="9" height="9" viewBox="0 0 9 9" fill="none" stroke="#444" strokeWidth="2">
                  <path d="M1 3l3.500 3.500L8 3" />
                </SelectMark>
              </SelectWrap>
              <EditType disabled>
                <S stroke="#a8a8a8">
                  <path d="M1 3l2-2h4v6H1zM9 3l2-2h4v5H9zM1 10l2-2h4v7H1zM9 8h6v7H9zM11 10h2M11 12h2" />
                </S>
                编辑类型
              </EditType>
            </FilterRow>
            <PropTable>
              <colgroup>
                <NameCol />
                <col />
              </colgroup>
              {sections.map((s, si) => (
                <tbody key={s.title}>
                  <tr>
                    <SectionHead colSpan={2} scope="rowgroup">
                      <SectionToggle>
                        {s.title}
                        <Collapse />
                      </SectionToggle>
                    </SectionHead>
                  </tr>
                  {s.rows.map((r, ri) => {
                    const id = `p${si}-${ri}`;
                    return (
                      <tr key={r.name}>
                        <NameCell $muted={r.muted} scope="row">
                          <label htmlFor={id}>{r.name}</label>
                        </NameCell>
                        <ValueCell>
                          {r.check !== undefined ? (
                            <Tick id={id} type="checkbox" defaultChecked={r.check} />
                          ) : (
                            <ValueInput id={id} type="text" defaultValue={r.value} disabled={r.muted} $focus={r.focus} />
                          )}
                        </ValueCell>
                      </tr>
                    );
                  })}
                </tbody>
              ))}
            </PropTable>
            <TableFill />
            <PaletteFooter>
              <HelpLink href="#help">属性帮助</HelpLink>
              <ApplyButton disabled>应用</ApplyButton>
            </PaletteFooter>
          </PaletteBody>
        </Palette>

        <View>
          <Drawing fill="none">
            <path d="M254 300.500h454M254 308.500h454M254 315.500h454M254 323.500h454M254.500 300v24M707.500 300v24" stroke="#000" />
            <path
              d="M254.500 14v493M481.500 14v493M707.500 14v493M14 311.500h1003"
              stroke="#008000"
              strokeDasharray="17 17"
            />
          </Drawing>
          <VScroll>
            <Chevron d="M1 6l3.500-3.500L8 6" />
            <ScrollThumb />
            <Chevron d="M1 3l3.500 3.500L8 3" />
          </VScroll>
          <ViewBar>
            <ScaleButton>
              <span>1</span>
              <span>:</span>
              <span>20</span>
            </ScaleButton>
            {viewIcons.map(([label, icon]) => (
              <ViewButton key={label} aria-label={label}>
                {icon}
              </ViewButton>
            ))}
            <HScroll>
              <Chevron d="M6 1L2.500 4.500 6 8" />
              <HTrack>
                <ScrollThumb $flat />
              </HTrack>
              <Chevron d="M3 1l3.500 3.500L3 8" />
            </HScroll>
          </ViewBar>
          <MdiButtons>
            <button aria-label="最小化视图"><S size={14}><path d="M1.500 7.500h11v3h-11z" fill="#fff" /></S></button>
            <button aria-label="还原视图"><S size={14}><path d="M4.500 1.500h8v8h-8z" fill="#fff" /><path d="M1.500 3.500h9v9h-9z" fill="#fff" /><path d="M4.500 6.500h3v3h-3z" /></S></button>
            <button aria-label="关闭视图"><S size={14}><path d="M2 2h3l2 3 2-3h3L9 7l3 5H9L7 9l-2 3H2l3-5z" fill="#fff" /></S></button>
          </MdiButtons>
          <NavBar>
            <NavSmall aria-label="关闭导航栏">
              <S size={8} stroke="#9a9a9a"><circle cx="4" cy="4" r="3.5" fill="#ccc" /><path d="M2.500 2.500l3 3m0-3l-3 3" /></S>
            </NavSmall>
            <NavTool aria-label="二维控制盘">
              <svg width="26" height="26" viewBox="0 0 26 26" fill="none" stroke="#a4a6ad" aria-hidden="true">
                <path d="M11 1h6q3 0 3 3v7a9 9 0 1 1-9-10z" fill="#e4e5e9" strokeWidth="1.5" />
                <circle cx="11" cy="10" r="4.5" fill="#f6f6f6" strokeWidth="1.5" />
                <text x="13" y="25" fontSize="10" fontWeight="700" fill="#7fa9c9" stroke="none" fontFamily="Liberation Sans, sans-serif">2D</text>
              </svg>
              <Caret c="#999" w={6} />
            </NavTool>
            <NavTool aria-label="区域放大" $line>
              <svg width="18" height="18" viewBox="0 0 18 18" fill="none" stroke="#9a9ca3" aria-hidden="true">
                <path d="M1 1h8l3 3v10H1zM9 1v3h3" fill="#f7f7f7" />
                <circle cx="11" cy="11" r="3.5" fill="#eee" strokeWidth="1.4" />
                <path d="M13.500 13.500l3 3" strokeWidth="2" />
              </svg>
              <Caret c="#999" w={6} />
            </NavTool>
            <NavSmall aria-label="自定义">
              <S size={8} stroke="#9a9a9a"><circle cx="4" cy="4" r="3.5" fill="#ddd" /><path d="M2 3.500h4M2 5.500h4" /></S>
            </NavSmall>
          </NavBar>
        </View>
      </Workspace>

      <StatusBar>
        <StatusText>单击可进行选择; 按 Tab 键并单击可选择其他项目; 按 Ctrl 键并单击可将</StatusText>
        <StatusTools>
          {statusIcons.map(([label, icon]) => (
            <StatusButton key={label} aria-label={label}>
              {icon}
            </StatusButton>
          ))}
          <StatusButton $plain aria-label="过滤器">
            <svg width="18" height="16" viewBox="0 0 18 16" fill="none" stroke="#444" aria-hidden="true">
              <path d="M1 1h15l-5 6v6l-4-3V7z" fill="#d8dade" />
            </svg>
            :0
          </StatusButton>
        </StatusTools>
      </StatusBar>
    </Page>
  );
}
